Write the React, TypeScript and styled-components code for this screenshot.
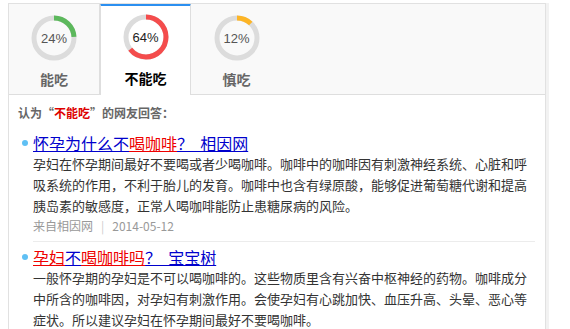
import styled, { createGlobalStyle } from 'styled-components'

//-----------------------------------------------------------------------------
// Data
//-----------------------------------------------------------------------------
type Tab = { label: string; percent: number; color: string; active?: boolean }

const tabs: Tab[] = [
  { label: '能吃', percent: 24, color: '#5cb85c' },
  { label: '不能吃', percent: 64, color: '#f44c4c', active: true },
  { label: '慎吃', percent: 12, color: '#fdb526' }
]

type Part = { text: string; hot?: boolean }
type Answer = { title: Part[]; desc: string; source?: string; date?: string }

const answers: Answer[] = [
  {
    title: [
      { text: '怀孕为什么不' },
      { text: '喝咖啡', hot: true },
      { text: '？  相因网' }
    ],
    desc:
      '孕妇在怀孕期间最好不要喝或者少喝咖啡。咖啡中的咖啡因有刺激神经系统、心脏和呼吸系统的作用，不利于胎儿的发育。咖啡中也含有绿原酸，能够促进葡萄糖代谢和提高胰岛素的敏感度，正常人喝咖啡能防止患糖尿病的风险。',
    source: '来自相因网',
    date: '2014-05-12'
  },
  {
    title: [
      { text: '孕妇', hot: true },
      { text: '不' },
      { text: '喝咖啡吗', hot: true },
      { text: '？  宝宝树' }
    ],
    desc:
      '一般怀孕期的孕妇是不可以喝咖啡的。这些物质里含有兴奋中枢神经的药物。咖啡成分中所含的咖啡因，对孕妇有刺激作用。会使孕妇有心跳加快、血压升高、头晕、恶心等症状。所以建议孕妇在怀孕期间最好不要喝咖啡。'
  }
]

//-----------------------------------------------------------------------------
// Ring
//-----------------------------------------------------------------------------
const Ring = ({ percent, color, dark }: { percent: number; color: string; dark?: boolean }): JSX.Element => {
  const r = 20
  const c = 2 * Math.PI * r
  return (
    <RingBox>
      <svg width="46" height="46" viewBox="0 0 46 46">
        <circle cx="23" cy="23" r={r} fill="none" stroke="#dcdcdc" strokeWidth="5" />
        <circle
          cx="23"
          cy="23"
          r={r}
          fill="none"
          stroke={color}
          strokeWidth="5"
          strokeDasharray={`${(c * percent) / 100} ${c}`}
          transform="rotate(-90 23 23)"
        />
      </svg>
      <RingText $dark={dark}>{percent}%</RingText>
    </RingBox>
  )
}

//-----------------------------------------------------------------------------
// Component
//-----------------------------------------------------------------------------
const App = (): JSX.Element => {
  return (
    <>
      <GlobalStyle />
      <Panel>
        <Tabs>
          {tabs.map((t) => (
            <TabItem key={t.label} $active={t.active}>
              <Ring percent={t.percent} color={t.color} dark={t.active} />
              <TabLabel $active={t.active}>{t.label}</TabLabel>
            </TabItem>
          ))}
        </Tabs>
        <Content>
          <Heading>
            认为“<HeadingHot>不能吃</HeadingHot>”的网友回答：
          </Heading>
          {answers.map((a, i) => (
            <Item key={i} $last={i === answers.length - 1}>
              <ItemTitle href="#">
                {a.title.map((p, j) => (
                  <TitlePart key={j} $hot={p.hot}>
                    {p.text}
                  </TitlePart>
                ))}
              </ItemTitle>
              <Desc>{a.desc}</Desc>
              {a.source && (
                <Source>
                  {a.source}
                  <Sep>|</Sep>
                  {a.date}
                </Source>
              )}
            </Item>
          ))}
        </Content>
      </Panel>
    </>
  )
}

//-----------------------------------------------------------------------------
// Styled Components
//-----------------------------------------------------------------------------
const GlobalStyle = createGlobalStyle`
  body {
    margin: 0;
    background: #fff;
    font-family: "Noto Sans CJK SC", "Liberation Sans", sans-serif;
  }
`
const Panel = styled.div`
  margin: 3px 0 0 8px;
  width: 536px;
  height: 340px;
  border: 1px solid #e1e1e1;
  border-bottom: none;
  box-shadow: 3px 0 0 #f2f2f2;
  overflow: hidden;
`
const Tabs = styled.div`
  display: flex;
  height: 90px;
  background: #f9f9f9;
  border-bottom: 1px solid #dedede;
`
const TabItem = styled.div<{ $active?: boolean }>`
  width: 91px;
  box-sizing: border-box;
  display: flex;
  flex-direction: column;
  align-items: center;
  padding-top: ${(p) => (p.$active ? '8px' : '11px')};
  background: ${(p) => (p.$active ? '#fff' : 'transparent')};
  border-top: ${(p) => (p.$active ? '3px solid #2b8ff0' : 'none')};
  border-left: ${(p) => (p.$active ? '1px solid #dedede' : 'none')};
  border-right: ${(p) => (p.$active ? '1px solid #dedede' : 'none')};
  margin-top: ${(p) => (p.$active ? '-1px' : '0')};
  height: ${(p) => (p.$active ? '92px' : '90px')};
  &:first-child {
    border-right: 1px solid #dedede;
  }
`
const RingBox = styled.div`
  position: relative;
  width: 46px;
  height: 46px;
  svg {
    display: block;
  }
`
const RingText = styled.div<{ $dark?: boolean }>`
  position: absolute;
  inset: 0;
  display: flex;
  align-items: center;
  justify-content: center;
  font-family: "Liberation Sans", Arial, sans-serif;
  font-size: 13px;
  color: ${(p) => (p.$dark ? '#222' : '#555')};
`
const TabLabel = styled.div<{ $active?: boolean }>`
  margin-top: 8px;
  font-size: 14px;
  line-height: 20px;
  font-weight: bold;
  color: ${(p) => (p.$active ? '#000' : '#666')};
`
const Content = styled.div`
  padding: 8px 0 0 9px;
`
const Heading = styled.div`
  font-size: 12px;
  line-height: 20px;
  font-weight: bold;
  color: #666;
  margin-bottom: 10px;
`
const HeadingHot = styled.span`
  color: #d00;
`
const Item = styled.div<{ $last?: boolean }>`
  position: relative;
  margin-left: 15px;
  width: 502px;
  padding-bottom: 5px;
  margin-bottom: 5px;
  border-bottom: ${(p) => (p.$last ? 'none' : '1px solid #ececec')};
  &::before {
    content: '';
    position: absolute;
    left: -11px;
    top: 7px;
    width: 6px;
    height: 6px;
    border-radius: 50%;
    background: #5fc0f4;
  }
`
const ItemTitle = styled.a`
  display: block;
  font-size: 16px;
  line-height: 20px;
  color: #00c;
  text-decoration: none;
`
const TitlePart = styled.span<{ $hot?: boolean }>`
  color: ${(p) => (p.$hot ? '#e00' : '#00c')};
  text-decoration: underline;
  white-space: pre;
`
const Desc = styled.div`
  font-size: 13px;
  line-height: 21px;
  color: #333;
`
const Source = styled.div`
  font-size: 12px;
  line-height: 20px;
  color: #999;
`
const Sep = styled.span`
  color: #ccc;
  margin: 0 8px;
`

export default App
